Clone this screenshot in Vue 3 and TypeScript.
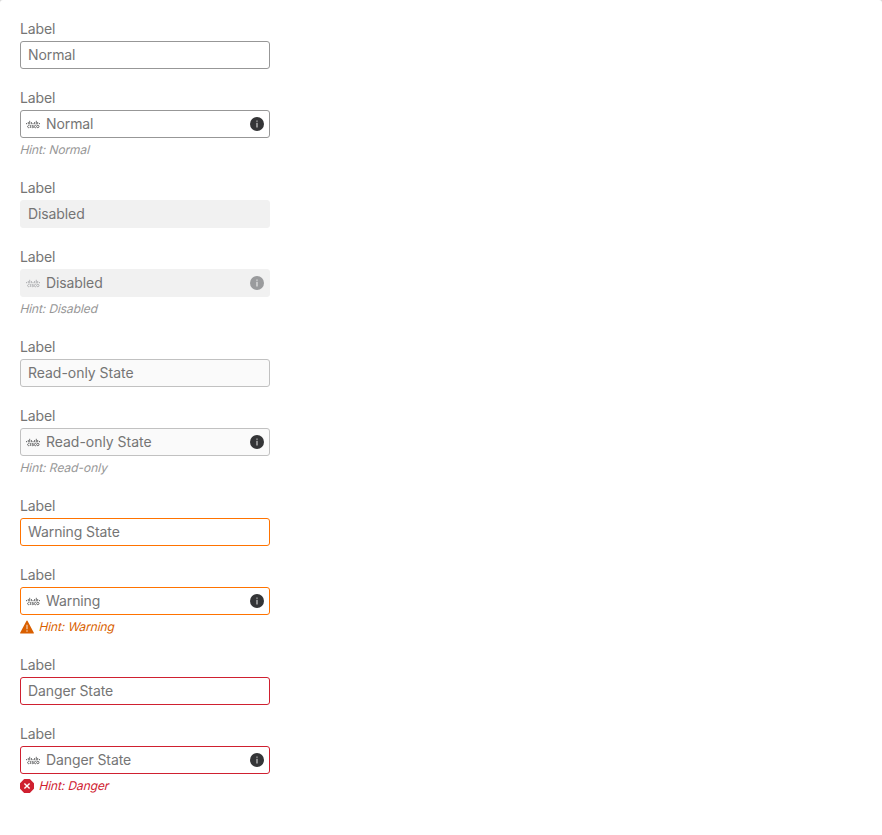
<script setup lang="ts">
type State = 'normal' | 'disabled' | 'readonly' | 'warning' | 'danger'

interface Field {
  state: State
  text: string
  hint?: string
}

const fields: Field[] = [
  { state: 'normal', text: 'Normal' },
  { state: 'normal', text: 'Normal', hint: 'Hint: Normal' },
  { state: 'disabled', text: 'Disabled' },
  { state: 'disabled', text: 'Disabled', hint: 'Hint: Disabled' },
  { state: 'readonly', text: 'Read-only State' },
  { state: 'readonly', text: 'Read-only State', hint: 'Hint: Read-only' },
  { state: 'warning', text: 'Warning State' },
  { state: 'warning', text: 'Warning', hint: 'Hint: Warning' },
  { state: 'danger', text: 'Danger State' },
  { state: 'danger', text: 'Danger State', hint: 'Hint: Danger' },
]
</script>

<template>
  <main class="page">
    <div v-for="(field, i) in fields" :key="i" class="field" :class="field.state">
      <div class="label">Label</div>
      <div class="control">
        <svg v-if="field.hint" class="brand" viewBox="0 0 14 14" fill="none" stroke="currentColor">
          <path
            stroke-width="0.7"
            d="M.5 6v1.2M2.3 5v2.2M3.7 3.8v3.6M5.4 5v2.2M7 6v1.2M8.6 5v2.2M10.3 3.8v3.6M11.7 5v2.2M13.5 6v1.2"
          />
          <path
            stroke-width="0.7"
            d="M3.4 8.5a1.2 1.2 0 1 0 0 2.1M4.7 8v3M7.5 8.4c-1.7-.3-1.9.8-.7 1.1 1.3.3 1 1.4-.9 1.1M10 8.5a1.2 1.2 0 1 0 0 2.1"
          />
          <circle cx="11.8" cy="9.5" r="1.2" stroke-width="0.7" />
        </svg>
        <span class="value">{{ field.text }}</span>
        <svg v-if="field.hint" class="info" viewBox="0 0 14 14">
          <circle cx="7" cy="7" r="7" fill="currentColor" />
          <rect class="mark" x="6.3" y="3.4" width="1.4" height="1.4" rx="0.4" />
          <rect class="mark" x="6.3" y="5.8" width="1.4" height="4.7" rx="0.3" />
        </svg>
      </div>
      <div v-if="field.hint" class="hint">
        <svg v-if="field.state === 'warning'" class="status" viewBox="0 0 14 14">
          <path
            fill="currentColor"
            d="M6.55.8a.5.5 0 0 1 .9 0l6.4 12a.5.5 0 0 1-.45.75H.6a.5.5 0 0 1-.45-.75z"
          />
          <path stroke="#fff" stroke-opacity="0.6" stroke-width="1.4" d="M7 4.8v4.4M7 10.3v1.4" />
        </svg>
        <svg v-if="field.state === 'danger'" class="status" viewBox="0 0 14 14">
          <path
            fill="currentColor"
            d="M4.6 0h4.8q.4 0 .7.3l3.6 3.6q.3.3.3.7v4.8q0 .4-.3.7l-3.6 3.6q-.3.3-.7.3H4.6q-.4 0-.7-.3L.3 10.1Q0 9.8 0 9.4V4.6q0-.4.3-.7L3.9.3Q4.2 0 4.6 0z"
          />
          <path stroke="#fff" stroke-width="1.4" d="M4.4 4.4l5.2 5.2M9.6 4.4l-5.2 5.2" />
        </svg>
        <span class="hint-text">{{ field.hint }}</span>
      </div>
    </div>
  </main>
</template>

<style>
body {
  background: #d8d8d8;
}
</style>

<style scoped>
.page {
  box-sizing: border-box;
  min-height: 835px;
  padding: 19px 20px;
  display: flex;
  flex-direction: column;
  gap: 19px;
  background: #fff;
  border-radius: 3px 3px 0 0;
  font-family: Inter, 'Liberation Sans', sans-serif;
  letter-spacing: -0.1px;
  color: #757575;
}
.field {
  width: 250px;
}
.label {
  font-size: 14px;
  line-height: 20px;
}
.control {
  box-sizing: border-box;
  height: 28px;
  margin-top: 2px;
  padding: 0 5px 0 7px;
  display: flex;
  align-items: center;
  border: 1px solid #979797;
  border-radius: 3px;
  background: #fff;
}
.value {
  flex: 1;
  font-size: 14px;
  line-height: 20px;
}
.brand {
  width: 14px;
  height: 14px;
  margin: 0 6px 0 -2px;
  color: #343537;
}
.info {
  width: 14px;
  height: 14px;
  color: #343537;
}
.mark {
  fill: #b4b4b4;
}
.hint {
  display: flex;
  align-items: center;
  gap: 5px;
  height: 17px;
  padding: 3px 0 1px;
  font-size: 12px;
  line-height: 17px;
  color: #979797;
}
.hint-text {
  transform: translateX(0.5px) skewX(-14deg);
}
.status {
  width: 14px;
  height: 14px;
}
.disabled .control {
  background: #f1f1f1;
  border-color: #f1f1f1;
}
.disabled .brand,
.disabled .info {
  color: #9a9b9d;
}
.disabled .mark {
  fill: #dcdcdc;
}
.readonly .control {
  background: #fafafa;
  border-color: #c1c1c1;
}
.readonly .value,
.readonly .hint-text {
  letter-spacing: -0.03px;
}
.warning .control {
  border-color: #ff7300;
}
.warning .hint {
  color: #d95f00;
}
.danger .control {
  border-color: #cf2030;
}
.danger .hint {
  color: #cf2030;
}
</style>
